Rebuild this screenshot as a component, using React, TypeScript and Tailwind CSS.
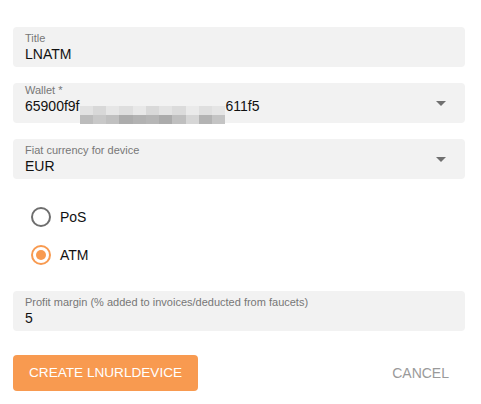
import React from "react";

function Caret() {
  return (
    <svg width="10" height="5" viewBox="0 0 10 5" className="shrink-0">
      <path d="M0 0 L10 0 L5 5 Z" fill="#707070" />
    </svg>
  );
}

function Field({ label, children, select }: { label: string; children: React.ReactNode; select?: boolean }) {
  return (
    <div className="flex h-[40px] items-center rounded-[4px] bg-[#f2f2f2] pl-[12px] pr-[19px]">
      <div className="flex min-w-0 flex-1 flex-col pt-[1px]">
        <div className="text-[11px] leading-[13px] text-[#777]">{label}</div>
        <div className="text-[14px] leading-[18px] text-[#111]">{children}</div>
      </div>
      {select && <Caret />}
    </div>
  );
}

const shades = [
  "#e2e2e2", "#d8d8d8", "#e6e6e6", "#dedede", "#e8e8e8", "#d9d9d9", "#e3e3e3", "#dbdbdb", "#eaeaea", "#dfdfdf", "#e5e5e5",
];
const shades2 = [
  "#bcbcbc", "#c8c8c8", "#c0c0c0", "#acacac", "#b2b2b2", "#b6b6b6", "#ababab", "#bfbfbf", "#d6d6d6", "#b3b3b3", "#c4c4c4",
];

function Blur() {
  return (
    <span className="inline-flex h-[18px] w-[146px] flex-col overflow-hidden align-[-4px] blur-[0.6px]">
      <span className="flex h-[9px]">
        {shades.map((c, i) => (
          <span key={i} className="h-full flex-1" style={{ background: c }} />
        ))}
      </span>
      <span className="flex h-[9px]">
        {shades2.map((c, i) => (
          <span key={i} className="h-full flex-1" style={{ background: c }} />
        ))}
      </span>
    </span>
  );
}

function Radio({ checked, label }: { checked?: boolean; label: string }) {
  return (
    <div className="flex h-[38px] items-center pl-[18px]">
      <span
        className={
          checked
            ? "flex h-[20px] w-[20px] items-center justify-center rounded-full border-2 border-[#f89a50]"
            : "flex h-[20px] w-[20px] items-center justify-center rounded-full border-2 border-[#6e6e6e]"
        }
      >
        {checked && <span className="h-[10px] w-[10px] rounded-full bg-[#f89a50]" />}
      </span>
      <span className="ml-[9px] text-[14px] text-[#111]">{label}</span>
    </div>
  );
}

export default function App() {
  return (
    <div
      className="min-h-[404px] w-[481px] bg-white px-[13px] pt-[27px]"
      style={{ fontFamily: '"Liberation Sans", Arial, sans-serif' }}
    >
      <div className="pr-[3px]">
        <div className="flex flex-col gap-[16px]">
          <Field label="Title">LNATM</Field>
          <Field label="Wallet *" select>
            <span className="whitespace-nowrap">
              65900f9f
              <Blur />
              611f5
            </span>
          </Field>
          <Field label="Fiat currency for device" select>
            EUR
          </Field>
        </div>
        <div className="mt-[19px]">
          <Radio label="PoS" />
          <Radio label="ATM" checked />
        </div>
        <div className="mt-[17px]">
          <Field label="Profit margin (% added to invoices/deducted from faucets)">5</Field>
        </div>
        <div className="mt-[24px] flex items-center justify-between">
          <button className="h-[36px] rounded-[4px] bg-[#f89a50] px-[16px] text-[13.6px] text-white">
            CREATE LNURLDEVICE
          </button>
          <button className="h-[36px] px-[16px] text-[14px] text-[#9a9a9a]">CANCEL</button>
        </div>
      </div>
    </div>
  );
}
